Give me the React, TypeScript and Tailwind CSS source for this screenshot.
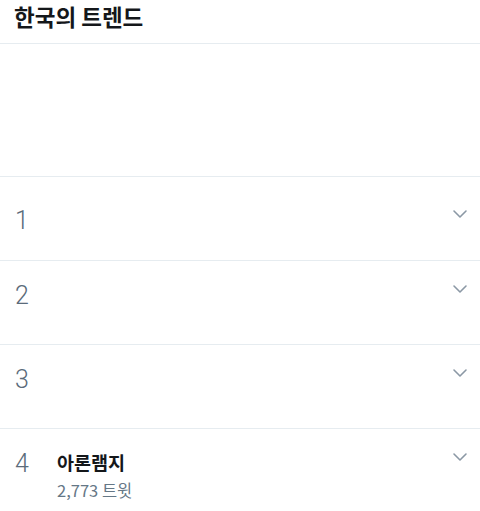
const trends = [
  { rank: 1, title: "", count: "", first: true },
  { rank: 2, title: "", count: "" },
  { rank: 3, title: "", count: "" },
  { rank: 4, title: "아론램지", count: "2,773 트윗" },
];

const Chevron = () => (
  <svg width="16" height="10" viewBox="0 0 16 10" fill="none" className="text-[#8b98a5]">
    <polyline points="2,2 8,8 14,2" stroke="currentColor" strokeWidth="1.6" strokeLinecap="round" strokeLinejoin="round" />
  </svg>
);

const TrendRow = ({ rank, title, count, first }: { rank: number; title: string; count: string; first?: boolean }) => (
  <div className={`flex h-[84px] border-b border-[#e6ecf0] ${first ? "pt-[29px]" : "pt-[20px]"}`}>
    <div className="w-[57px] pl-[15px] font-['Roboto'] font-light text-[25px] leading-[30px] text-[#5b6b7a]">{rank}</div>
    <div className="flex-1 flex flex-col">
      <div className="font-bold text-[18.5px] leading-[26px] text-[#14171a] h-[26px]">{title}</div>
      {count && <div className="text-[16.5px] leading-[22px] mt-[4px] text-[#657786]">{count}</div>}
    </div>
    <div className="pr-[12px] pt-[3px]">
      <Chevron />
    </div>
  </div>
);

export default function App() {
  return (
    <div className="w-[480px] h-[511px] overflow-hidden bg-white font-['Noto_Sans_CJK_KR',sans-serif]">
      <div className="h-[44px] border-b border-[#e6ecf0] px-[14px]">
        <h2 className="text-[22.5px] leading-[32px] font-bold text-[#14171a]">한국의 트렌드</h2>
      </div>
      <div className="h-[133px] border-b border-[#e6ecf0]" />
      {trends.map((t) => (
        <TrendRow key={t.rank} {...t} />
      ))}
    </div>
  );
}
